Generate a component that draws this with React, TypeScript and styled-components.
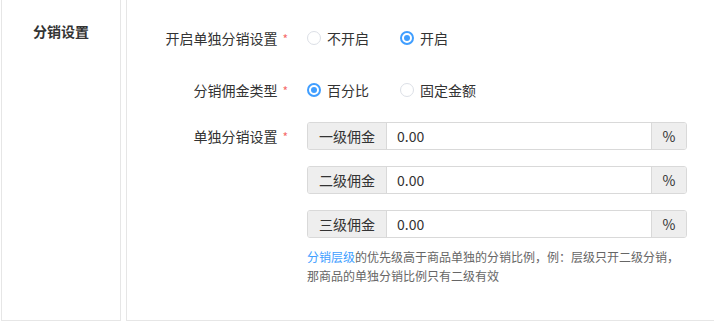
import React from "react";
import styled, { createGlobalStyle } from "styled-components";

const GlobalStyle = createGlobalStyle`
  html, body {
    margin: 0;
    padding: 0;
    background: #fff;
  }
  body {
    font-family: "Microsoft YaHei", "Noto Sans CJK SC", "Liberation Sans", sans-serif;
    color: #333;
  }
`;

const colors = {
  border: "#e6e6e6",
  text: "#333",
  muted: "#666",
  primary: "#409eff",
  danger: "#f56c6c",
  addonBg: "#eeeeee",
  inputBorder: "#d9d9d9",
};

const Page = styled.div`
  display: flex;
  gap: 5px;
  padding-left: 1px;
  height: 321px;
  overflow: hidden;
`;

const SidePanel = styled.aside`
  box-sizing: border-box;
  width: 120px;
  height: 321px;
  border: 1px solid ${colors.border};
  border-top: none;
  padding-top: 21px;
  text-align: center;
`;

const SideTitle = styled.h3`
  margin: 0;
  font-size: 14px;
  line-height: 20px;
  font-weight: bold;
  color: ${colors.text};
`;

const MainPanel = styled.section`
  box-sizing: border-box;
  flex: 1;
  height: 321px;
  border-left: 1px solid ${colors.border};
  border-bottom: 1px solid ${colors.border};
  padding-top: 24px;
`;

const FormRow = styled.div<{ $mb?: number }>`
  display: grid;
  grid-template-columns: 168px 380px;
  column-gap: 12px;
  align-items: start;
  margin-bottom: ${(p) => p.$mb ?? 0}px;
`;

const Label = styled.label`
  height: 28px;
  line-height: 28px;
  padding-right: 7px;
  text-align: right;
  font-size: 14px;
  color: ${colors.text};
  white-space: nowrap;
`;

const Star = styled.span`
  margin-left: 5px;
  font-size: 12px;
  color: ${colors.danger};
`;

const RadioGroup = styled.div`
  display: flex;
  align-items: center;
  height: 28px;
`;

const RadioItem = styled.span`
  display: inline-flex;
  align-items: center;
  gap: 6px;
  width: 93px;
  font-size: 14px;
  color: ${colors.text};
  cursor: pointer;
`;

const RadioDot = styled.span<{ $checked?: boolean }>`
  box-sizing: border-box;
  width: 14px;
  height: 14px;
  border-radius: 50%;
  border: ${(p) => (p.$checked ? `2px solid ${colors.primary}` : "1px solid #dcdfe6")};
  display: inline-flex;
  align-items: center;
  justify-content: center;
  background: #fff;

  &::after {
    content: "";
    display: ${(p) => (p.$checked ? "block" : "none")};
    width: 6px;
    height: 6px;
    border-radius: 50%;
    background: ${colors.primary};
  }
`;

const Fields = styled.div`
  display: flex;
  flex-direction: column;
  gap: 16px;
`;

const InputGroup = styled.div`
  box-sizing: border-box;
  display: flex;
  height: 28px;
  border: 1px solid ${colors.inputBorder};
  border-radius: 3px;
  overflow: hidden;
`;

const Addon = styled.span<{ $w: number; $left?: boolean }>`
  flex: none;
  width: ${(p) => p.$w}px;
  display: flex;
  align-items: center;
  justify-content: center;
  background: ${colors.addonBg};
  font-size: 14px;
  color: ${colors.text};
  ${(p) =>
    p.$left
      ? `border-right: 1px solid ${colors.inputBorder};`
      : `border-left: 1px solid ${colors.inputBorder};`}
`;

const Input = styled.input`
  flex: 1;
  min-width: 0;
  border: none;
  outline: none;
  padding: 0 10px;
  font-family: inherit;
  font-size: 14px;
  color: ${colors.text};
  background: #fff;
`;

const Help = styled.p`
  margin: 9px 0 0;
  font-size: 12px;
  line-height: 19px;
  color: ${colors.muted};
`;

const HelpLink = styled.span`
  color: ${colors.primary};
`;

const levels = ["一级佣金", "二级佣金", "三级佣金"];

const Radio: React.FC<{ checked?: boolean; label: string }> = ({ checked, label }) => (
  <RadioItem>
    <RadioDot $checked={checked} />
    {label}
  </RadioItem>
);

export default function App() {
  return (
    <>
      <GlobalStyle />
      <Page>
        <SidePanel>
          <SideTitle>分销设置</SideTitle>
        </SidePanel>
        <MainPanel>
          <FormRow $mb={24}>
            <Label>
              开启单独分销设置<Star>*</Star>
            </Label>
            <RadioGroup>
              <Radio label="不开启" />
              <Radio label="开启" checked />
            </RadioGroup>
          </FormRow>
          <FormRow $mb={18}>
            <Label>
              分销佣金类型<Star>*</Star>
            </Label>
            <RadioGroup>
              <Radio label="百分比" checked />
              <Radio label="固定金额" />
            </RadioGroup>
          </FormRow>
          <FormRow>
            <Label>
              单独分销设置<Star>*</Star>
            </Label>
            <div>
              <Fields>
                {levels.map((name) => (
                  <InputGroup key={name}>
                    <Addon $w={78} $left>
                      {name}
                    </Addon>
                    <Input defaultValue="0.00" />
                    <Addon $w={34}>%</Addon>
                  </InputGroup>
                ))}
              </Fields>
              <Help>
                <HelpLink>分销层级</HelpLink>
                的优先级高于商品单独的分销比例，例：层级只开二级分销，那商品的单独分销比例只有二级有效
              </Help>
            </div>
          </FormRow>
        </MainPanel>
      </Page>
    </>
  );
}
